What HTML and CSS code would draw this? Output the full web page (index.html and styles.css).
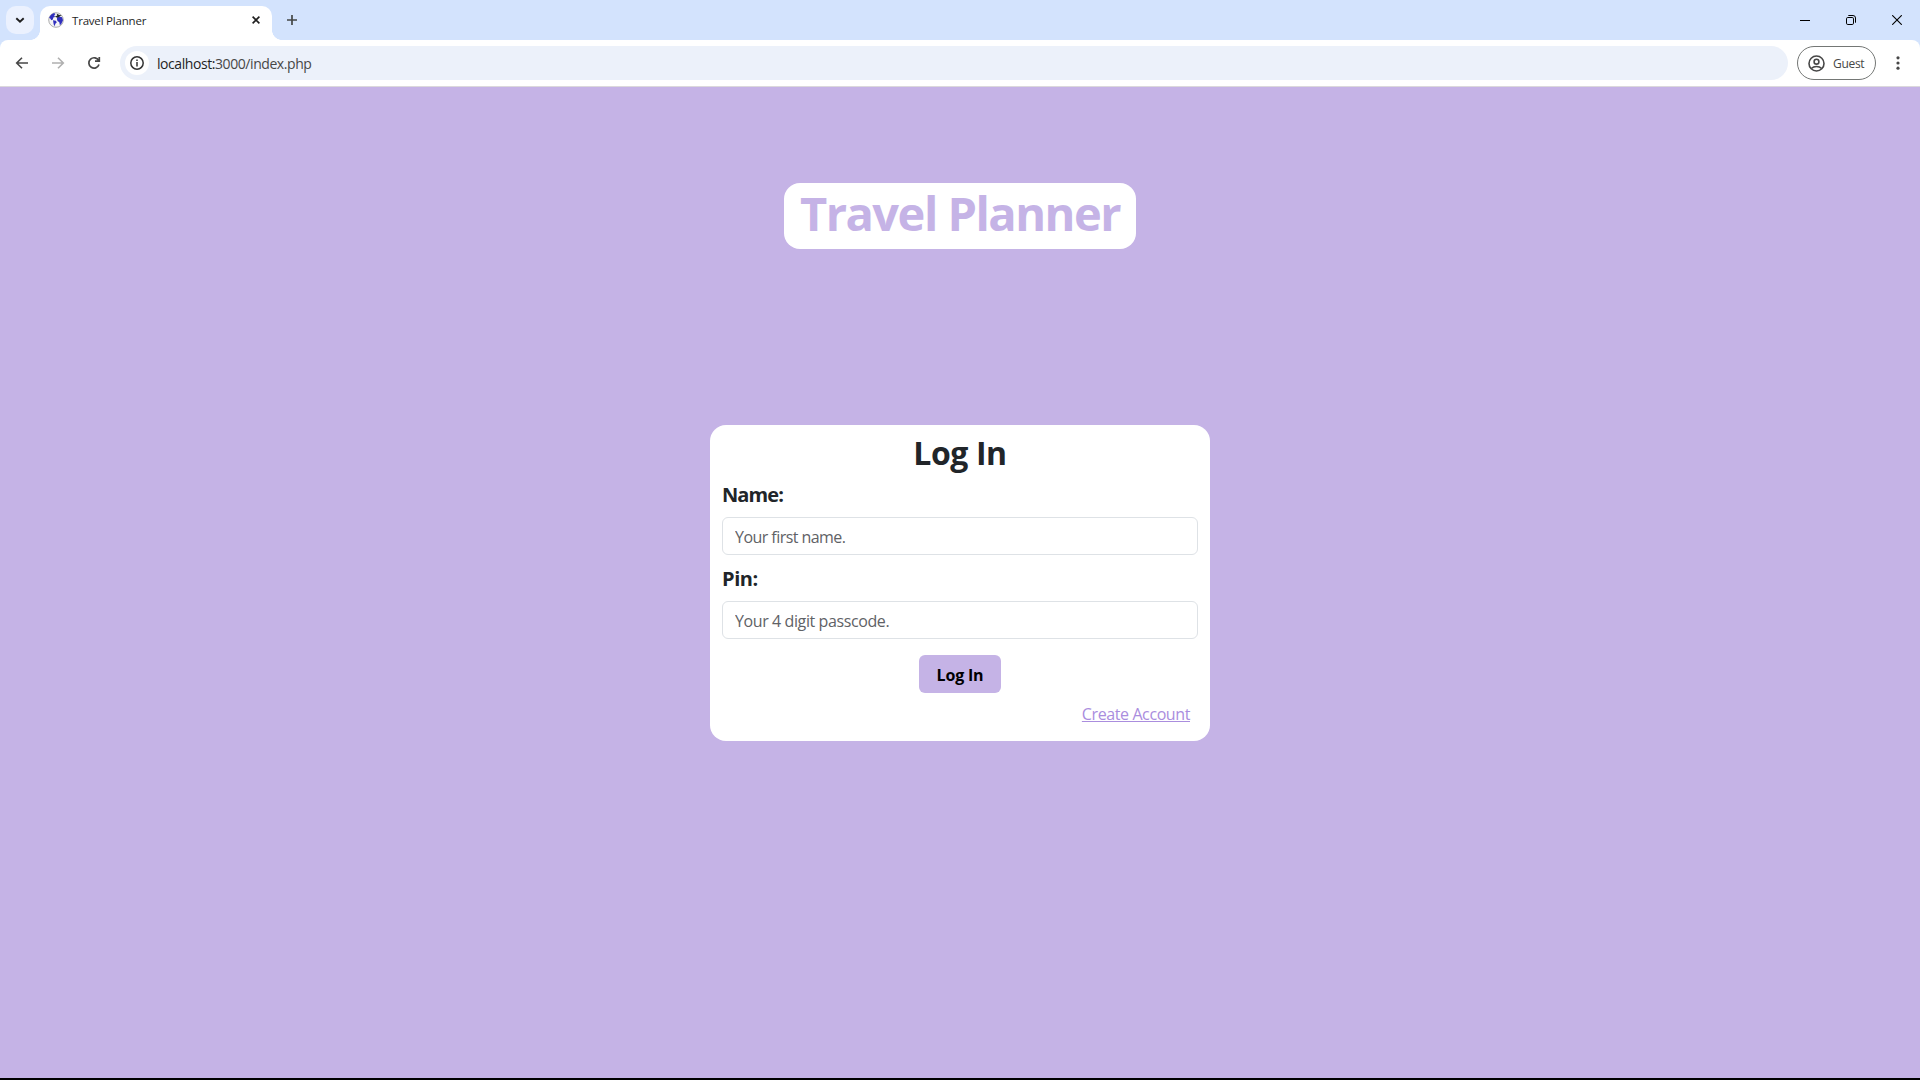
FILE: index.html
```html
<!DOCTYPE html>
<html lang="en">
<head>
<meta charset="utf-8">
<title>Travel Planner</title>
<link rel="stylesheet" href="styles.css">
</head>
<body>
<div class="window">
  <header class="tab-strip">
    <button class="tab-search" aria-label="Search tabs"><svg width="10" height="10" viewBox="0 0 10 10"><path d="M1.3 3.2 5 6.7 8.7 3.2" fill="none" stroke="#1f1f1f" stroke-width="1.9"/></svg></button>
    <div class="tab">
      <svg class="favicon" width="16" height="16" viewBox="0 0 16 16"><circle cx="8" cy="8" r="7.3" fill="#f4f4f6" stroke="#999" stroke-width=".8"/><path d="M1.1 5.8 3 2.7 6 1.1 7.4 2 6.2 3.6 7 5 5.3 5.6 4.9 7.5 3.2 8.2 2.5 6.8ZM5 8.3 7.8 8.8 8.8 10.3 7.2 12 6.9 14.3 5.7 12.4ZM9.2 5.5 11 4.4 14.1 5.3 15 8.2 13.4 11.7 11.9 13.2 11.3 10.2 9.5 9 8.9 7Z" fill="#302fbd"/><path d="M6.8 4.8 9.2 3.5 8.7 1.8 11.5 2.9 13.5 3.2 11.7 4.6 9.5 5.7Z" fill="#20282c"/></svg>
      <span class="tab-title">Travel Planner</span>
      <svg class="tab-close" width="10" height="10" viewBox="0 0 10 10"><path d="M1.6 1.6 8.4 8.4M8.4 1.6 1.6 8.4" stroke="#1f1f1f" stroke-width="1.6"/></svg>
    </div>
    <svg class="new-tab" width="12" height="12" viewBox="0 0 12 12"><path d="M6 1V11M1 6H11" stroke="#444746" stroke-width="1.7"/></svg>
    <div class="window-controls">
      <svg width="10" height="10" viewBox="0 0 10 10"><path d="M0 5.5H10" stroke="#000"/></svg>
      <svg width="10" height="10" viewBox="0 0 10 10"><rect x=".5" y="2.5" width="7" height="7" rx="1.3" fill="none" stroke="#000"/><path d="M2.3.5H7A2.5 2.5 0 0 1 9.5 3V7.7" fill="none" stroke="#000"/></svg>
      <svg width="10" height="10" viewBox="0 0 10 10"><path d="M.2.2 9.8 9.8M9.8.2.2 9.8" stroke="#000" stroke-width="1.1"/></svg>
    </div>
  </header>
  <nav class="toolbar">
    <svg class="nav-icon" width="14" height="14" viewBox="0 0 14 14"><path d="M13 7H2M7 1.7 1.7 7 7 12.3" fill="none" stroke="#474747" stroke-width="1.6"/></svg>
    <svg class="nav-icon" width="14" height="14" viewBox="0 0 14 14"><path d="M1 7H12M7 1.7 12.3 7 7 12.3" fill="none" stroke="#b0b0b0" stroke-width="1.6"/></svg>
    <svg class="nav-icon" width="14" height="14" viewBox="0 0 14 14"><path d="M11.7 4.6A5.2 5.2 0 1 0 12 8.6M12.3 1V5.2H8" fill="none" stroke="#474747" stroke-width="1.7"/></svg>
    <div class="address">
      <span class="site-info"><svg width="14" height="14" viewBox="0 0 14 14"><circle cx="7" cy="7" r="6.2" fill="none" stroke="#333" stroke-width="1.5"/><path d="M7 6V10.4M7 3.5V5" stroke="#333" stroke-width="1.5"/></svg></span>
      <span class="url"><b>localhost:</b>3000/index.php</span>
    </div>
    <button class="profile">
      <svg width="17" height="17" viewBox="0 0 17 17"><g fill="none" stroke="#474747" stroke-width="1.6"><circle cx="8.5" cy="8.5" r="7.5"/><circle cx="8.5" cy="6.7" r="2.4"/><path d="M3.3 13.5C6 10.8 11 10.8 13.7 13.5"/></g></svg>
      <span>Guest</span>
    </button>
    <svg class="menu" width="4" height="14" viewBox="0 0 4 14"><g fill="#474747"><circle cx="2" cy="1.8" r="1.6"/><circle cx="2" cy="7" r="1.6"/><circle cx="2" cy="12.2" r="1.6"/></g></svg>
  </nav>
  <main class="page">
    <h1 class="brand"><span>Travel Planner</span></h1>
    <form class="card">
      <h2 class="card-title"><span>Log In</span></h2>
      <label class="label label-name" for="name">Name:</label>
      <input class="field field-name" id="name" type="text" placeholder="Your first name.">
      <label class="label label-pin" for="pin">Pin:</label>
      <input class="field field-pin" id="pin" type="text" placeholder="Your 4 digit passcode.">
      <button class="submit" type="button">Log In</button>
      <a class="create" href="#">Create Account</a>
    </form>
  </main>
</div>
</body>
</html>
```
FILE: styles.css
```css
* { box-sizing: border-box; }
body { margin: 0; background: #000; font-family: "Open Sans", "Noto Sans", sans-serif; overflow: hidden; }
svg { display: block; flex: none; }
button { border: 0; padding: 0; font-family: inherit; }
.window { height: 1078px; display: flex; flex-direction: column; background: #d3e3fd; }

.tab-strip { height: 40px; flex: none; display: flex; align-items: flex-start; padding: 6px 18px 0 6px; }
.tab-search { width: 28px; height: 28px; border-radius: 10px; background: #ebf1fe; display: flex; align-items: center; justify-content: center; margin-right: 6px; }
.tab { position: relative; width: 232px; height: 34px; background: #fff; border-radius: 10px 10px 0 0; display: flex; align-items: center; padding: 0 11px 6px 8px; }
.tab::before, .tab::after { content: ""; position: absolute; bottom: 0; width: 10px; height: 10px; }
.tab::before { left: -10px; background: radial-gradient(circle at 0 0, transparent 9.6px, #fff 10.2px); }
.tab::after { right: -10px; background: radial-gradient(circle at 100% 0, transparent 9.6px, #fff 10.2px); }
.tab-title { margin-left: 8px; font-size: 11.5px; letter-spacing: -.2px; color: #1f1f1f; flex: 1; white-space: nowrap; }
.new-tab { margin: 8px 0 0 14px; }
.window-controls { margin: 9px 0 0 auto; display: flex; gap: 36px; }

.toolbar { height: 47px; flex: none; background: #fff; border-bottom: 1px solid #dbd8dc; border-radius: 8px 8px 0 0; display: flex; align-items: center; padding: 0 20px 0 15px; }
.nav-icon { margin-right: 22px; }
.address { flex: 1; height: 34px; border-radius: 17px; background: #ecf1fa; display: flex; align-items: center; padding-left: 5px; margin-left: -3px; }
.site-info { width: 24px; height: 24px; border-radius: 50%; background: #fff; display: flex; align-items: center; justify-content: center; }
.url { margin-left: 8px; font-size: 14px; letter-spacing: -.43px; color: #474747; }
.url b { font-weight: 400; color: #1f1f1f; }
.profile { width: 79px; height: 34px; margin: 0 20px 0 9px; border: 1px solid #747775; border-radius: 17px; background: #fff; color: #474747; display: flex; align-items: center; padding-left: 10px; gap: 8px; font-size: 12px; letter-spacing: -.3px; }

.page { flex: 1; background: #c5b3e6; color: #212529; display: flex; flex-direction: column; align-items: center; padding-top: 96px; }
.brand { margin: 0 0 176px; width: 352px; height: 66px; border-radius: 16px; background: #fff; color: #c5b3e6; display: flex; justify-content: center; font-size: 47px; line-height: 61px; letter-spacing: -1.5px; white-space: nowrap; }
.card { width: 500px; height: 316px; border-radius: 16px; background: #fff; padding: 8px 12px; display: flex; flex-direction: column; }
.card-title { margin: 0; text-align: center; font-size: 32px; line-height: 40px; height: 47px; letter-spacing: -.4px; }
.label { font-size: 20px; font-weight: 700; line-height: 30px; height: 37px; letter-spacing: -.4px; }
.label-name { letter-spacing: -.9px; }
.field { height: 38px; flex: none; border: 1px solid #dee2e6; border-radius: 6px; padding: 1px 12px 0; margin: 0 0 9px; font: 16px/24px "Open Sans", "Noto Sans", sans-serif; letter-spacing: -.4px; color: #212529; background: #fff; }
.field-name { letter-spacing: -.55px; }
.field::placeholder { color: #5f6266; opacity: 1; }
.submit { width: 82px; height: 38px; margin: 7px 0 8px; padding-top: 1px; align-self: center; border-radius: 6px; background: #c5b3e6; color: #000; font-size: 16px; font-weight: 700; letter-spacing: -.2px; }
.create { align-self: flex-end; margin-right: 8px; font-size: 16px; line-height: 26px; letter-spacing: -.4px; color: #aa8dde; text-decoration: underline; }
```
